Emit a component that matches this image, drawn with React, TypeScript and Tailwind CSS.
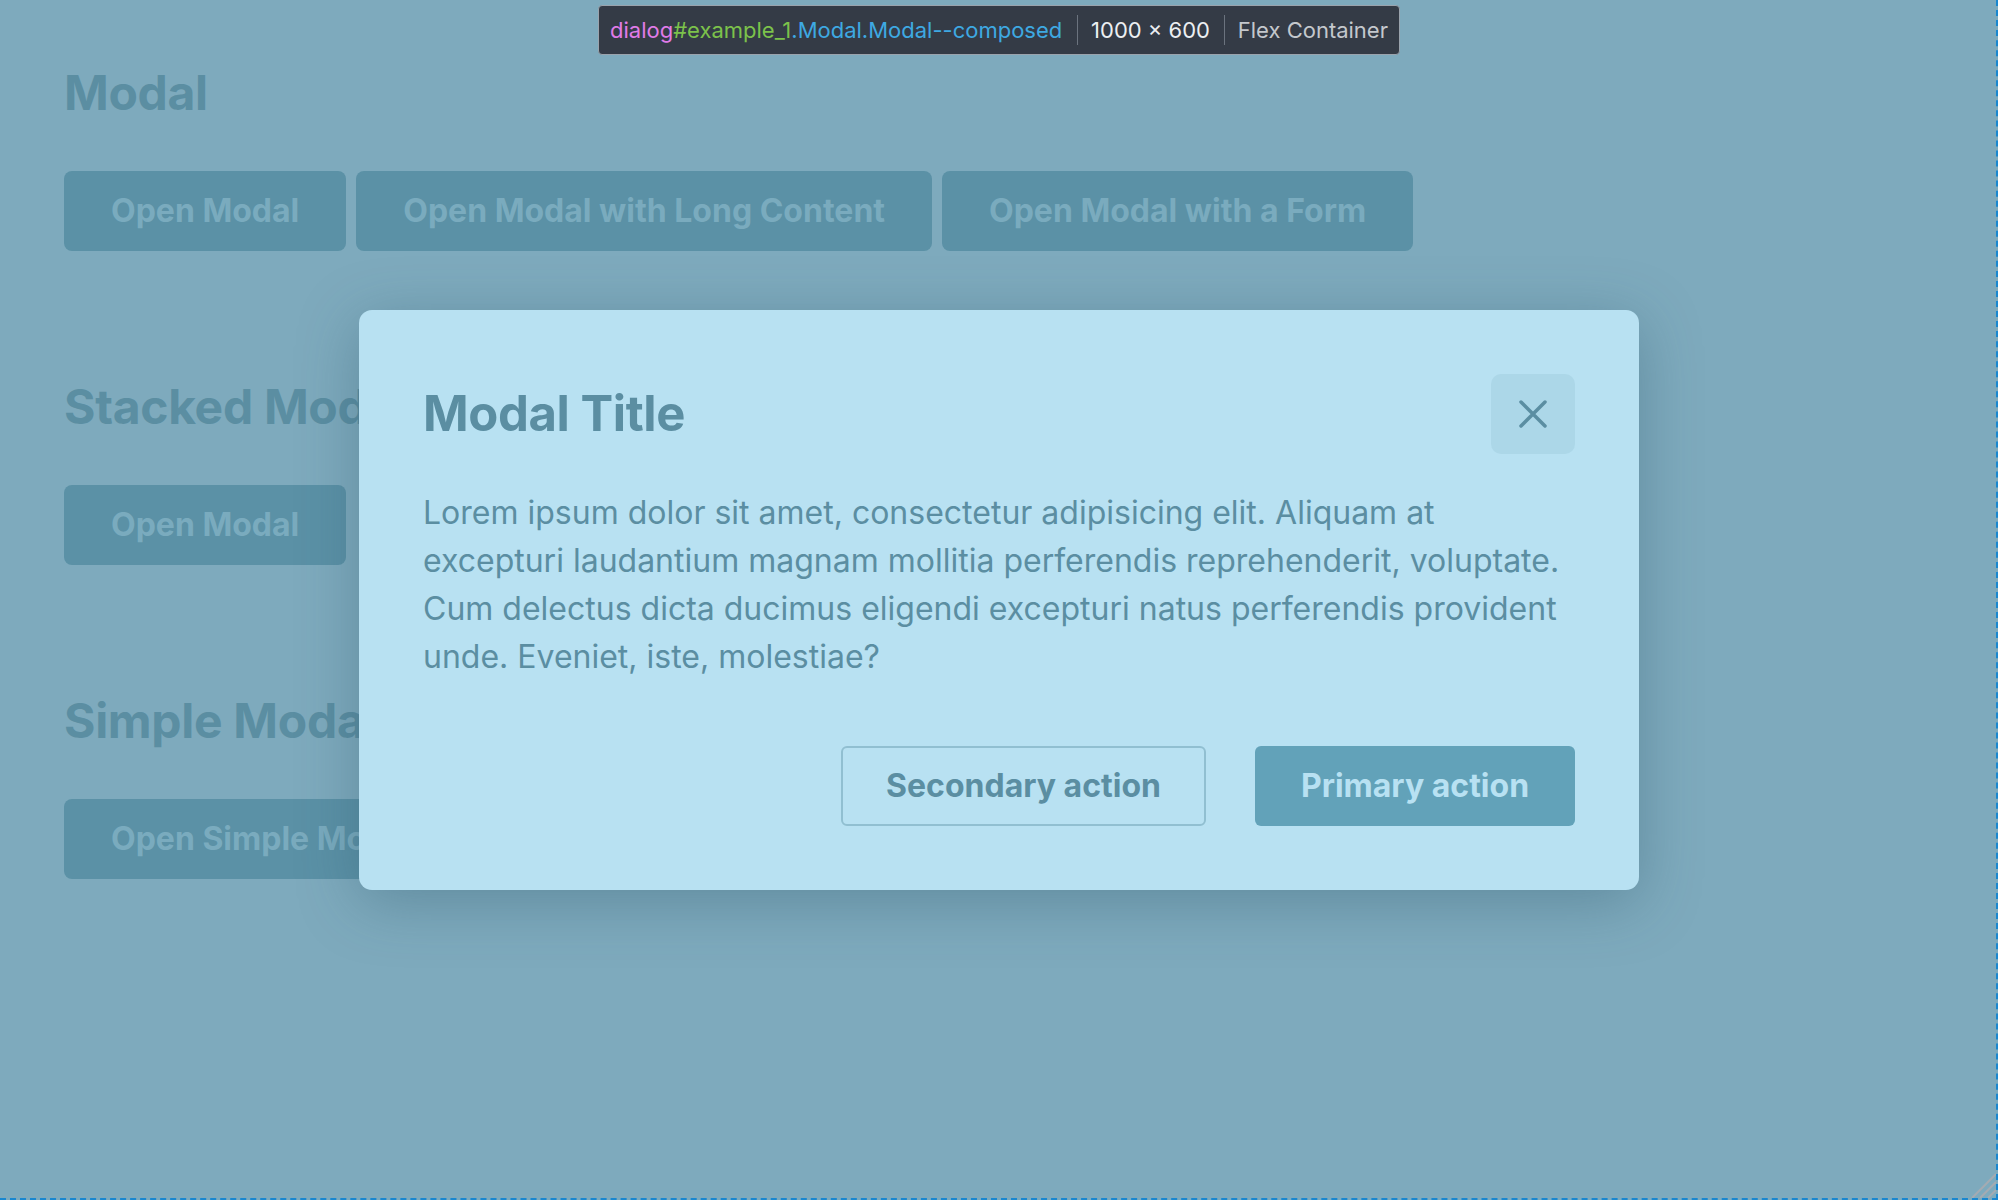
const font = 'font-["Inter","Liberation_Sans",sans-serif]'

function PageButton({ label }: { label: string }) {
  return (
    <button className="h-[80px] px-[47px] rounded-[8px] bg-[#5b91a6] text-[#7aabbe] text-[32px] font-bold leading-none whitespace-nowrap">
      {label}
    </button>
  )
}

function Section({ title, buttons }: { title: string; buttons: string[] }) {
  return (
    <section className="flex flex-col">
      <h2 className="text-[48px] leading-[50px] font-bold text-[#5b8ea2] tracking-[-0.3px]">{title}</h2>
      <div className="mt-[53px] flex gap-[10px]">
        {buttons.map((b) => (
          <PageButton key={b} label={b} />
        ))}
      </div>
    </section>
  )
}

function InspectTooltip() {
  return (
    <div className="absolute left-[598px] top-[5px] h-[50px] w-[802px] flex items-center px-[11px] rounded-[4px] bg-[#343b46] border border-[#9aa3ad] text-[22px] leading-none whitespace-nowrap font-['Inter',sans-serif]">
      <span className="text-[#e07be8]">dialog</span>
      <span className="text-[#7cc24b]">#example_1</span>
      <span className="text-[#3ea9e2]">.Modal.Modal--composed</span>
      <span className="ml-[15px] mr-[13px] h-[30px] w-px bg-[#6b737e]" />
      <span className="text-[#eceff2]">1000 × 600</span>
      <span className="ml-[14px] mr-[13px] h-[30px] w-px bg-[#6b737e]" />
      <span className="text-[#c4c8cd]">Flex Container</span>
    </div>
  )
}

function Modal() {
  return (
    <div className="absolute left-[359px] top-[310px] w-[1280px] rounded-[13px] bg-[#b8e1f2] p-[64px] shadow-[0_12px_60px_rgba(40,80,100,0.35)]">
      <div className="flex items-center justify-between">
        <h1 className="text-[49px] leading-[50px] font-bold text-[#5b8ea2] tracking-[-0.4px]">Modal Title</h1>
        <button className="w-[84px] h-[80px] rounded-[10px] bg-[#acd7e8] flex items-center justify-center">
          <svg width="28" height="28" viewBox="0 0 28 28" fill="none">
            <path d="M2 2 26 26 M26 2 2 26" stroke="#5b8ea2" strokeWidth="3.5" strokeLinecap="round" />
          </svg>
        </button>
      </div>
      <p className="mt-[35px] text-[32px] leading-[48px] text-[#5b8ea2]">
        Lorem ipsum dolor sit amet, consectetur adipisicing elit. Aliquam at excepturi laudantium magnam mollitia
        perferendis reprehenderit, voluptate. Cum delectus dicta ducimus eligendi excepturi natus perferendis provident
        unde. Eveniet, iste, molestiae?
      </p>
      <div className="mt-[65px] flex justify-end gap-[49px]">
        <button className="h-[80px] w-[365px] rounded-[6px] border-2 border-[#91bfd1] text-[32px] font-bold text-[#5b8ea2]">
          Secondary action
        </button>
        <button className="h-[80px] w-[320px] rounded-[6px] bg-[#62a2b9] text-[32px] font-bold text-[#b8e1f2]">
          Primary action
        </button>
      </div>
    </div>
  )
}

export default function App() {
  return (
    <div className={`relative w-[1998px] h-[1200px] overflow-hidden bg-[#7eaabd] ${font}`}>
      <div className="absolute inset-0 border-r-2 border-b-2 border-dashed border-[#1a87cf] pointer-events-none" />
      <main className="flex flex-col gap-[131px] pl-[64px] pt-[68px]">
        <Section title="Modal" buttons={['Open Modal', 'Open Modal with Long Content', 'Open Modal with a Form']} />
        <Section title="Stacked Modals" buttons={['Open Modal']} />
        <Section title="Simple Modal" buttons={['Open Simple Modal']} />
      </main>
      <Modal />
      <InspectTooltip />
      <svg className="absolute right-[2px] bottom-[2px]" width="26" height="26" viewBox="0 0 26 26">
        <path d="M2 26 26 2 M10 26 26 10 M18 26 26 18" stroke="#a4abb2" strokeWidth="2" />
      </svg>
    </div>
  )
}
